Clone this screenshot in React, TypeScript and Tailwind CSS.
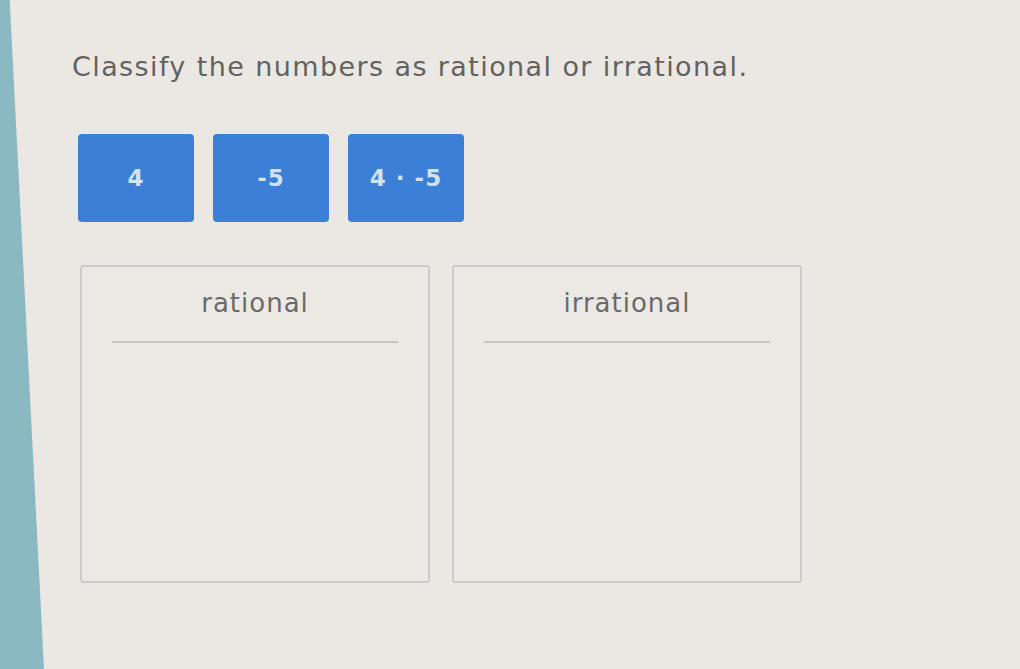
export default function App() {
  const tiles = ["4", "-5", "4 · -5"];
  const bins = ["rational", "irrational"];

  return (
    <div className="flex h-[669px] w-[1020px] overflow-hidden bg-[#ebe8e3] font-['DejaVu_Sans',sans-serif]">
      <div className="w-[44px] shrink-0 bg-[#8ab9c2] [clip-path:polygon(0_0,22%_0,100%_100%,0_100%)]" />
      <div className="flex flex-col pl-[28px]">
        <h1 className="mt-[50px] text-[27px] leading-[34px] tracking-[1.4px] text-[#626262]">
          Classify the numbers as rational or irrational.
        </h1>

        <div className="mt-[50px] ml-[6px] flex gap-[19px]">
          {tiles.map((t) => (
            <div
              key={t}
              className="flex h-[88px] w-[116px] items-center justify-center rounded-[4px] bg-[#3b80d6] text-[23px] font-bold tracking-[1px] text-[#d3e2f3]"
            >
              {t}
            </div>
          ))}
        </div>

        <div className="mt-[43px] ml-[8px] flex gap-[22px]">
          {bins.map((b) => (
            <div
              key={b}
              className="flex h-[318px] w-[350px] flex-col rounded-[3px] border-2 border-[#c9cdca] bg-[#ece9e5]"
            >
              <div className="pt-[20px] text-center text-[26px] leading-[32px] tracking-[1px] text-[#6a6a6a]">{b}</div>
              <div className="mx-[30px] mt-[22px] h-[2px] bg-[#c3c6c4]" />
            </div>
          ))}
        </div>
      </div>
    </div>
  );
}
